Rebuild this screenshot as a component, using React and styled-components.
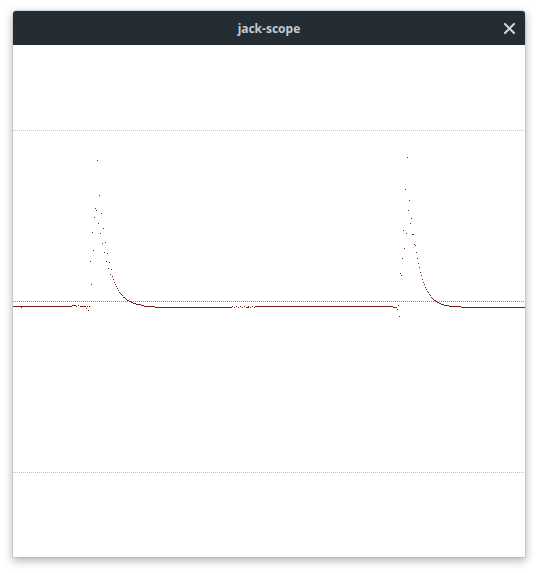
import React from "react";
import styled, { createGlobalStyle } from "styled-components";

const Global = createGlobalStyle`
  html, body { margin: 0; padding: 0; background: #ffffff; }
  body { font-family: "Noto Sans", "DejaVu Sans", sans-serif; }
`;

const Page = styled.div`
  padding: 11px 13px 16px 13px;
  display: flex;
`;

const Window = styled.div`
  width: 512px;
  display: flex;
  flex-direction: column;
  border-radius: 3px 3px 0 0;
  box-shadow: 0 3px 9px 1px rgba(0, 0, 0, 0.28), 0 0 0 1px rgba(0, 0, 0, 0.08);
  background: #ffffff;
`;

const TitleBar = styled.div`
  height: 34px;
  background: #232d33;
  border-radius: 3px 3px 0 0;
  display: flex;
  align-items: center;
  justify-content: center;
  position: relative;
`;

const Title = styled.span`
  color: #c3cacf;
  font-family: "Noto Sans", "DejaVu Sans", sans-serif;
  font-weight: 700;
  font-size: 12px;
  letter-spacing: 0;
`;

const CloseButton = styled.button`
  position: absolute;
  right: 10px;
  top: 11px;
  width: 12px;
  height: 12px;
  padding: 0;
  border: 0;
  background: transparent;
  display: flex;
  align-items: center;
  justify-content: center;
`;

const Scope = styled.svg`
  display: block;
  width: 512px;
  height: 512px;
  background: #ffffff;
`;

const OX = 13;
const OY = 45;
const RED = "#7d1a1a";

const scatter1 = [
  [97, 160], [99, 195], [95, 208], [96, 210], [101, 213], [94, 217], [98, 223],
  [103, 228], [92, 232], [100, 233], [105, 242], [102, 243], [93, 250], [104, 252],
  [107, 253], [90, 261], [106, 261], [109, 262], [108, 268], [111, 269], [110, 274],
  [91, 284], [76, 306], [78, 305], [80, 306], [86, 308], [87, 306], [88, 310], [89, 306], [21, 307],
];
const scatter2 = [
  [407, 157], [405, 189], [409, 200], [408, 210], [411, 218], [410, 223], [403, 230],
  [406, 233], [412, 234], [413, 234], [404, 248], [414, 244], [402, 258], [400, 273],
  [401, 275], [398, 305], [397, 309], [399, 316],
];
const glitch = [];
for (let x = 232; x < 255; x += 2) glitch.push([x, x % 4 === 0 ? 306 : 307]);

const segments = [
  [13, 72, 306], [72, 76, 305], [81, 86, 306],
  [144, 155, 306], [155, 232, 307], [246, 249, 307], [255, 393, 306], [393, 397, 307],
  [453, 461, 306], [461, 525, 307],
];

function tail(peak, amp, base, tau, from, to) {
  const pts = [];
  for (let x = from; x <= to; x++) {
    const y = Math.round(base - amp * Math.exp(-(x - peak) / tau));
    pts.push([x, y]);
  }
  return pts;
}

const dots = [
  ...scatter1,
  ...scatter2,
  ...glitch,
  ...tail(97, 146, 306, 9.5, 112, 143),
  ...tail(407, 150, 307, 9, 415, 452),
];

export default function App() {
  return (
    <>
      <Global />
      <Page>
        <Window>
          <TitleBar>
            <Title>jack-scope</Title>
            <CloseButton aria-label="Close">
              <svg width="11" height="11" viewBox="0 0 11 11">
                <path d="M1 1 L10 10 M10 1 L1 10" stroke="#d0d5d8" strokeWidth="2.1" strokeLinecap="square" />
              </svg>
            </CloseButton>
          </TitleBar>
          <Scope viewBox="0 0 512 512" shapeRendering="crispEdges">
            <line x1="0" x2="512" y1="85.5" y2="85.5" stroke="#c2c2c2" strokeDasharray="1 1" />
            <line x1="0" x2="512" y1="256.5" y2="256.5" stroke="#8c8c8c" strokeDasharray="1 1" />
            <line x1="0" x2="512" y1="427.5" y2="427.5" stroke="#c2c2c2" strokeDasharray="1 1" />
            {segments.map(([a, b, y], i) => (
              <rect key={"s" + i} x={a - OX} y={y - OY} width={b - a} height={1} fill={RED} />
            ))}
            {dots.map(([x, y], i) => (
              <rect key={"d" + i} x={x - OX} y={y - OY} width={1} height={1} fill={RED} />
            ))}
          </Scope>
        </Window>
      </Page>
    </>
  );
}
